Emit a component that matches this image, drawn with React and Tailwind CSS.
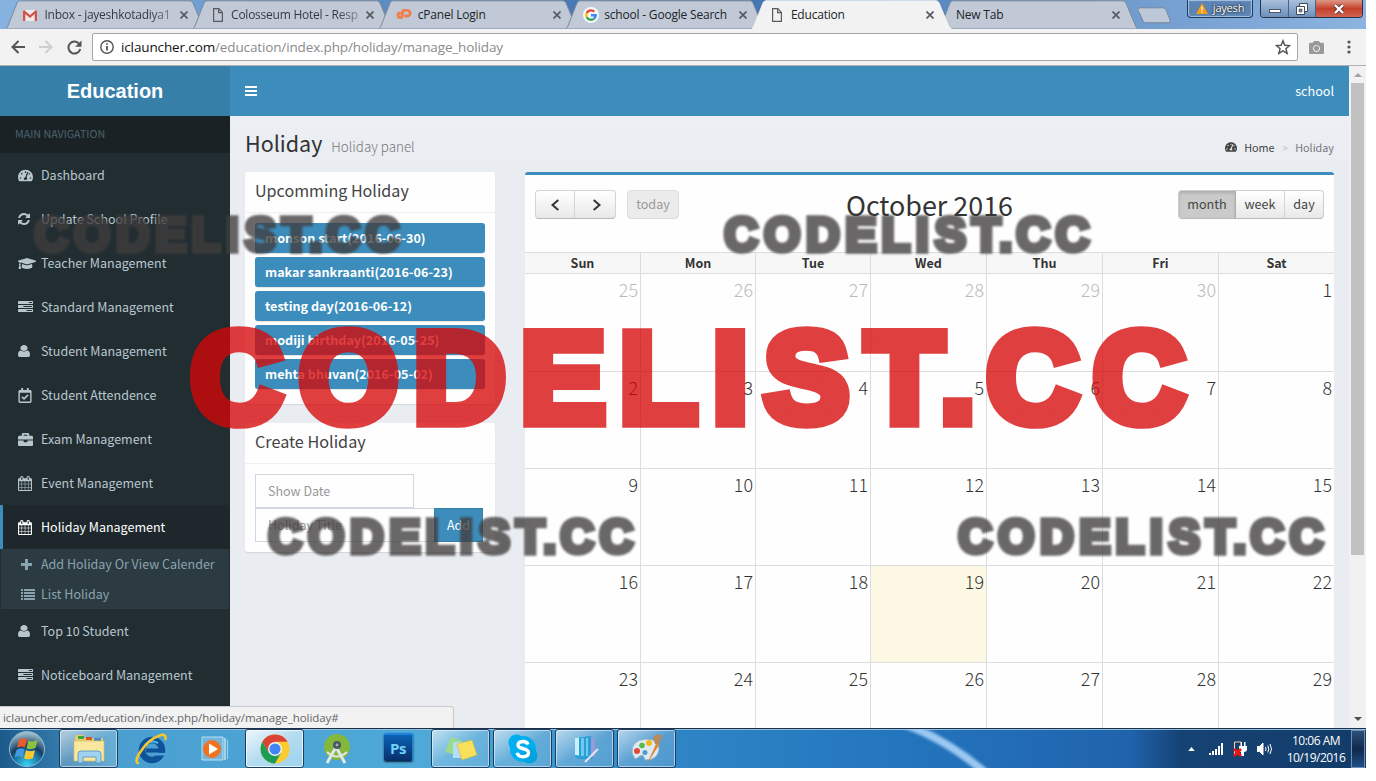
import React from "react";
import { FaTachometerAlt, FaGraduationCap, FaRegCalendarCheck, FaBriefcase, FaCamera } from "react-icons/fa";

const CAL =
  "M192 1664h288v-288h-288v288zm352 0h320v-288h-320v288zm-352-352h288v-320h-288v320zm352 0h320v-320h-320v320zm-352-384h288v-288h-288v288zm736 736h320v-288h-320v288zm-384-736h320v-288h-320v288zm768 736h288v-288h-288v288zm-384-352h320v-320h-320v320zm-352-864v-288q0-13-9.5-22.5t-22.5-9.5h-64q-13 0-22.5 9.5t-9.5 22.5v288q0 13 9.5 22.5t22.5 9.5h64q13 0 22.5-9.5t9.5-22.5zm736 864h288v-320h-288v320zm-384-384h320v-288h-320v288zm384 0h288v-288h-288v288zm32-480v-288q0-13-9.5-22.5t-22.5-9.5h-64q-13 0-22.5 9.5t-9.5 22.5v288q0 13 9.5 22.5t22.5 9.5h64q13 0 22.5-9.5t9.5-22.5zm384-64v1280q0 52-38 90t-90 38h-1408q-52 0-90-38t-38-90v-1280q0-52 38-90t90-38h128v-96q0-66 47-113t113-47h64q66 0 113 47t47 113v96h384v-96q0-66 47-113t113-47h64q66 0 113 47t47 113v96h128q52 0 90 38t38 90z";
const TASKS =
  "M1024 1408h640v-128h-640v128zm-384-512h1024v-128h-1024v128zm640-512h384v-128h-384v128zm512 832v256q0 26-19 45t-45 19h-1664q-26 0-45-19t-19-45v-256q0-26 19-45t45-19h1664q26 0 45 19t19 45zm0-512v256q0 26-19 45t-45 19h-1664q-26 0-45-19t-19-45v-256q0-26 19-45t45-19h1664q26 0 45 19t19 45zm0-512v256q0 26-19 45t-45 19h-1664q-26 0-45-19t-19-45v-256q0-26 19-45t45-19h1664q26 0 45 19t19 45z";
const USER =
  "M1536 1399q0 109-62.5 187t-150.5 78h-854q-88 0-150.5-78t-62.5-187q0-85 8.5-160.5t31.5-152 58.5-131 94-89 134.5-34.5q131 128 313 128t313-128q76 0 134.5 34.5t94 89 58.5 131 31.5 152 8.5 160.5zm-256-887q0 159-112.5 271.5t-271.5 112.5-271.5-112.5-112.5-271.5 112.5-271.5 271.5-112.5 271.5 112.5 112.5 271.5z";
const REFRESH =
  "M1639 1056q0 5-1 7-64 268-268 434.5t-478 166.5q-146 0-282.5-55t-243.5-157l-129 129q-19 19-45 19t-45-19-19-45v-448q0-26 19-45t45-19h448q26 0 45 19t19 45-19 45l-137 137q71 66 161 102t187 36q134 0 250-65t186-179q11-17 53-117 8-23 30-23h192q13 0 22.5 9.5t9.5 22.5zm25-800v448q0 26-19 45t-45 19h-448q-26 0-45-19t-19-45 19-45l138-138q-148-137-349-137-134 0-250 65t-186 179q-11 17-53 117-8 23-30 23h-199q-13 0-22.5-9.5t-9.5-22.5v-7q65-268 270-434.5t480-166.5q146 0 284 55.5t245 156.5l130-129q19-19 45-19t45 19 19 45z";

const Calendar = () => <svg viewBox="64 0 1664 1792" className="h-[15px] w-[14px]" fill="currentColor"><path d={CAL} /></svg>;
const Tasks = () => <svg viewBox="0 128 1792 1536" className="h-[12px] w-[15px]" preserveAspectRatio="none" fill="currentColor"><path d={TASKS} /></svg>;
const User = () => <svg viewBox="256 128 1280 1536" className="h-[12px] w-[12px]" preserveAspectRatio="none" fill="currentColor"><path d={USER} /></svg>;
const Refresh = () => <svg viewBox="128 128 1536 1536" className="h-[12px] w-[12px]" fill="currentColor"><path d={REFRESH} /></svg>;

function Cross() {
  return (
    <svg viewBox="0 0 8 8" className="h-2 w-2 shrink-0" stroke="#555b63" strokeWidth="1.7">
      <path d="M.5.5l7 7M7.5.5l-7 7" />
    </svg>
  );
}

function PageIcon() {
  return (
    <svg viewBox="0 0 10 14" className="ml-[3px] h-[14px] w-[10px]" fill="none" stroke="#5a5a5f" strokeWidth="1.2">
      <path d="M.6.6h5.2l3.6 3.8v9H.6z M5.6.6v4h3.8" />
    </svg>
  );
}

const Gmail = () => (
  <svg viewBox="0 0 14 11" className="h-[11px] w-[14px]">
    <path d="M0 0h14v11H0z" fill="#ececec" />
    <path d="M0 11V1l1-1 6 5 6-5 1 1v10h-2.3V4L7 8 2.3 4v7z" fill="#d3524a" />
  </svg>
);

const CPanel = () => (
  <svg viewBox="0 0 16 12" className="h-3 w-4" fill="none" stroke="#f17f4c" strokeWidth="2.8" strokeLinecap="round">
    <path d="M6.4 3.8H4.4a2.3 2.3 0 0 0 0 4.8h1.1L7.3 1.4h4a2.8 2.8 0 0 1 0 5.6H9.2" />
  </svg>
);

const Google = () => (
  <svg viewBox="0 0 16 16" className="h-4 w-4" fill="none" strokeWidth="2.4">
    <circle cx="8" cy="8" r="8" fill="#f5f7fa" />
    <path d="M11.3 4.7A4.7 4.7 0 0 0 3.8 6" stroke="#ea4335" />
    <path d="M3.8 6a4.7 4.7 0 0 0 0 4.2" stroke="#fbbc05" />
    <path d="M3.8 10.2a4.7 4.7 0 0 0 7.3 1.4" stroke="#34a853" />
    <path d="M11.1 11.6a4.6 4.6 0 0 0 1.6-3.3H8" stroke="#4285f4" />
  </svg>
);

const tabs = [
  { icon: <Gmail />, title: "Inbox - jayeshkotadiya1", fade: true },
  { icon: <PageIcon />, title: "Colosseum Hotel - Resp", fade: true },
  { icon: <CPanel />, title: "cPanel Login" },
  { icon: <Google />, title: "school - Google Search" },
  { icon: <PageIcon />, title: "Education", active: true },
  { title: "New Tab" },
];

function Tab({ icon, title, active, fade }) {
  return (
    <div className={active ? "relative z-10 h-[29px] w-[186.6px] shrink-0" : "relative h-[29px] w-[186.6px] shrink-0"}>
      <svg viewBox="0 0 200 29" className="absolute top-0 -left-[1px] h-[29px] w-[200px]">
        <path d="M0 28.5L1.500 27L11 3Q12 .8 14 .8H184Q186 .8 187 3L197 27L199 28.5V29H0z"
          fill={active ? "#f2f2f2" : "#c0c9d5"} stroke={active ? "#f2f2f2" : "#7b8a9d"} />
      </svg>
      <div className="relative flex h-[29px] items-center pt-px pl-[16px]">
        {icon && <span className="flex w-[21.500px] items-center">{icon}</span>}
        <span className={fade
          ? "w-[132px] overflow-hidden whitespace-nowrap bg-linear-to-r from-[#303740] from-80% to-[#303740]/30 bg-clip-text text-[12px] tracking-[-0.25px] text-transparent"
          : "w-[132px] grow-0 overflow-hidden whitespace-nowrap text-[12px] tracking-[-0.2px] text-[#20242a]"}>{title}</span>
        {!icon && <span className="w-[21.500px]" />}
        <span className="ml-[3px] flex"><Cross /></span>
      </div>
    </div>
  );
}

function BrowserTop() {
  return (
    <div className="flex h-[66px] flex-col font-['Open_Sans',sans-serif]">
      <div className="relative flex h-[29px] items-start bg-linear-to-r from-[#86b3e0] via-[#3d6fae] via-50% to-[#8db4e0] pl-[7px]">
        {tabs.map((t) => <Tab key={t.title} {...t} />)}
        <svg viewBox="0 0 34 17" className="mt-[7px] ml-[10px] h-[17px] w-[34px] shrink-0">
          <path d="M3 .8h23q2 0 3 2l4 10q1 3-1 3H9q-2 0-3-2L1 3Q0 .8 3 .8z" fill="#bcc8d8" stroke="#76879d" />
        </svg>
        <div className="absolute top-0 left-[1187px] flex h-[18px] w-[66px] items-center justify-center gap-[5px] rounded-b border border-t-0 border-[#1e3a5c] bg-[#5b83b3] text-[11px] text-white shadow-[inset_0_0_1px_1px_#a9c4e2]">
          <svg viewBox="0 0 12 11" className="h-[11px] w-3"><path d="M6 0l6 11H0z" fill="#f59b16" /><path d="M6 3.5v4M6 8.5v1.3" stroke="#fff" strokeWidth="1.2" /></svg>
          <span className="tracking-[-0.2px] [text-shadow:0_0_2px_#222,0_0_2px_#222]">jayesh</span>
        </div>
        <div className="absolute top-0 left-[1260px] flex h-[18px] w-[103px] overflow-hidden rounded-b border border-t-0 border-[#24344c] shadow-[inset_0_0_1px_1px_#d0def0]">
          <div className="flex w-[28px] items-center justify-center border-r border-[#4a6386] bg-linear-to-b from-[#a9c0dc] to-[#6d8fba]">
            <span className="mt-1 h-1 w-[12px] border border-[#4b5768] bg-white" />
          </div>
          <div className="flex w-[27px] items-center justify-center border-r border-[#4a6386] bg-linear-to-b from-[#a9c0dc] to-[#6d8fba]">
            <svg viewBox="0 0 12 12" className="h-3 w-3" fill="#fff" stroke="#3f4a5a"><path d="M3.5.5h8v8h-8z" /><path d="M.5 3.5h8v8h-8z" /><path d="M3.2 6.2h2.6v2.6H3.2z" fill="#8aa5c8" /></svg>
          </div>
          <div className="flex grow items-center justify-center bg-linear-to-b from-[#dd9686] via-[#c5402b] to-[#d06450]">
            <svg viewBox="0 0 12 10" className="h-[10px] w-3"><path d="M2 1l8 8M10 1L2 9" stroke="#6b3430" strokeWidth="4" /><path d="M2 1l8 8M10 1L2 9" stroke="#fff" strokeWidth="2.4" /></svg>
          </div>
        </div>
      </div>
      <div className="flex h-[37px] items-center border-b border-[#b0b0b0] bg-[#f2f2f2] pl-[11px]">
        <svg viewBox="0 0 14 14" className="h-[14px] w-[14px]" fill="none" stroke="#555" strokeWidth="2"><path d="M14 7H1.5M7.5 1L1.5 7l6 6" /></svg>
        <svg viewBox="0 0 14 14" className="ml-[14px] h-[14px] w-[14px]" fill="none" stroke="#cfcfcf" strokeWidth="2"><path d="M0 7h12.5M6.500 1l6 6-6 6" /></svg>
        <svg viewBox="0 0 15 15" className="ml-[14px] h-[15px] w-[15px]" fill="none" stroke="#555" strokeWidth="2"><path d="M12.500 4.200A6 6 0 1 0 13.300 9" /><path d="M14.500.5v6.300H8.200z" fill="#555" stroke="none" /></svg>
        <div className="ml-[10px] flex h-[28px] w-[1206px] items-center rounded-[2px] border border-[#a6a6a6] bg-white pl-[7px]">
          <svg viewBox="0 0 14 14" className="h-[14px] w-[14px]" fill="none" stroke="#555" strokeWidth="1.400"><circle cx="7" cy="7" r="6.200" /><path d="M7 6v4.500M7 3.300v1.500" strokeWidth="1.800" /></svg>
          <span className="ml-[7px] text-[13.500px] tracking-[-0.130px] text-[#8a8a8a]"><span className="text-[#111]">iclauncher.com</span>/education/index.php/holiday/manage_holiday</span>
          <svg viewBox="0 0 24 24" className="mr-[6px] ml-auto h-[16px] w-[16px]" fill="none" stroke="#555" strokeWidth="2.200"><path d="M12 2.500l2.700 6.800 7.300.5-5.600 4.700 1.800 7.100L12 17.700l-6.200 3.900 1.800-7.100L2 9.800l7.300-.5z" /></svg>
        </div>
        <FaCamera className="ml-[11px] h-[15px] w-[15px] text-[#999]" />
        <svg viewBox="0 0 4 14" className="ml-[23px] h-[14px] w-1" fill="#555"><circle cx="2" cy="2" r="1.600" /><circle cx="2" cy="7" r="1.600" /><circle cx="2" cy="12" r="1.600" /></svg>
      </div>
    </div>
  );
}

const nav = [
  { icon: <FaTachometerAlt className="h-[15px] w-[15px]" />, label: "Dashboard" },
  { icon: <Refresh />, label: "Update School Profile" },
  { icon: <FaGraduationCap className="h-[15px] w-[18px]" />, label: "Teacher Management" },
  { icon: <Tasks />, label: "Standard Management" },
  { icon: <User />, label: "Student Management" },
  { icon: <FaRegCalendarCheck className="h-[15px] w-[14px]" />, label: "Student Attendence" },
  { icon: <FaBriefcase className="h-[15px] w-[15px]" />, label: "Exam Management" },
  { icon: <Calendar />, label: "Event Management" },
];

function NavItem({ icon, label, active }) {
  return (
    <div className={active
      ? "flex h-[44px] items-center border-l-[3px] border-[#3c8dbc] bg-[#1e282c] pl-[15px] text-white"
      : "flex h-[44px] items-center border-l-[3px] border-transparent pl-[15px] text-[#b8c7ce]"}>
      <span className="flex w-[23px] shrink-0 items-center">{icon}</span>
      <span className="whitespace-nowrap">{label}</span>
    </div>
  );
}

function Sidebar() {
  return (
    <aside className="flex w-[230px] shrink-0 flex-col bg-[#222d32] text-[12.5px]">
      <div className="flex h-[50px] shrink-0 items-center justify-center bg-[#367fa9] font-['Liberation_Sans',sans-serif] text-[20px] font-bold text-white">Education</div>
      <div className="flex h-[37px] shrink-0 items-center bg-[#1a2226] pl-[15px] text-[10.7px] text-[#4b646f]">MAIN NAVIGATION</div>
      {nav.map((n) => <NavItem key={n.label} {...n} />)}
      <NavItem icon={<Calendar />} label="Holiday Management" active />
      <div className="mx-px flex h-[60px] shrink-0 flex-col bg-[#2c3b41] text-[#8aa4af]">
        <div className="flex h-[30px] items-center pl-[20px]">
          <span className="w-[20px]"><svg viewBox="0 0 11 11" className="h-[11px] w-[11px]" fill="currentColor"><path d="M4 0h3v4h4v3H7v4H4V7H0V4h4z" /></svg></span>
          Add Holiday Or View Calender
        </div>
        <div className="flex h-[30px] items-center pl-[20px]">
          <span className="w-[20px]"><svg viewBox="0 0 14 11" className="h-[11px] w-[14px]" fill="currentColor"><path d="M0 0h2v2H0zM3 0h11v2H3zM0 3h2v2H0zM3 3h11v2H3zM0 6h2v2H0zM3 6h11v2H3zM0 9h2v2H0zM3 9h11v2H3z" /></svg></span>
          List Holiday
        </div>
      </div>
      <NavItem icon={<User />} label="Top 10 Student" />
      <NavItem icon={<Tasks />} label="Noticeboard Management" />
    </aside>
  );
}

const holidays = [
  "monson start(2016-06-30)",
  "makar sankraanti(2016-06-23)",
  "testing day(2016-06-12)",
  "modiji birthday(2016-05-25)",
  "mehta bhuvan(2016-05-02)",
];

const weeks = [
  [25, 26, 27, 28, 29, 30, 1],
  [2, 3, 4, 5, 6, 7, 8],
  [9, 10, 11, 12, 13, 14, 15],
  [16, 17, 18, 19, 20, 21, 22],
  [23, 24, 25, 26, 27, 28, 29],
];

function LeftColumn() {
  return (
    <div className="flex w-[250px] shrink-0 flex-col">
      <section className="h-[232px] rounded-[3px] bg-[#fefefe] shadow-[0_1px_1px_rgba(0,0,0,0.1)]">
        <h3 className="flex h-[41px] items-center border-b border-[#f0f0f0] pb-[3px] pl-[10px] text-[16.1px] text-[#444]">Upcomming Holiday</h3>
        <div className="flex flex-col gap-1 p-[10px]">
          {holidays.map((h) => (
            <div key={h} className="flex h-[30px] items-center rounded-[3px] bg-[#3c8dbc] pl-[10px] text-[12.6px] font-bold text-white shadow-[0_1px_1px_rgba(0,0,0,0.1)]">{h}</div>
          ))}
        </div>
      </section>
      <section className="mt-[19px] h-[129px] rounded-[3px] bg-[#fefefe] shadow-[0_1px_1px_rgba(0,0,0,0.1)]">
        <h3 className="flex h-[41px] items-center border-b border-[#f0f0f0] pb-[3px] pl-[10px] text-[16.2px] text-[#444]">Create Holiday</h3>
        <div className="flex flex-col p-[10px] text-[12.5px] text-[#999]">
          <div className="flex h-[34px] w-[159px] items-center border border-[#d2d6de] pl-[12px]">Show Date</div>
          <div className="flex h-[34px] w-[228px]">
            <div className="flex w-[179px] items-center border border-r-0 border-[#d2d6de] pl-[12px]">Holiday Title</div>
            <div className="flex w-[49px] items-center justify-center border border-[#367fa9] bg-[#3c8dbc] text-white">Add</div>
          </div>
        </div>
      </section>
    </div>
  );
}

function CalendarPanel() {
  return (
    <section className="flex w-[809px] shrink-0 flex-col rounded-t-[3px] border-t-[3px] border-[#3c8dbc] bg-[#fefefe]">
      <div className="grid h-[77px] grid-cols-[1fr_auto_1fr] items-start px-[10px] pt-[15px] text-[12.6px] text-[#444]">
        <div className="flex">
          <div className="flex h-[29px] w-[81px] rounded border border-[#d4d4d4] border-b-[#b8b8b8] bg-linear-to-b from-white to-[#e8e8e8]">
            <span className="flex w-[40px] items-center justify-center border-r border-[#d4d4d4]"><svg viewBox="0 0 8 12" className="h-3 w-2" fill="none" stroke="#333" strokeWidth="2"><path d="M7.300 1L1.500 6l5.800 5" /></svg></span>
            <span className="flex w-[40px] items-center justify-center pl-[3px]"><svg viewBox="0 0 8 12" className="h-3 w-2" fill="none" stroke="#333" strokeWidth="2"><path d="M.7 1l5.800 5L.7 11" /></svg></span>
          </div>
          <span className="ml-[11px] flex h-[29px] w-[52px] items-center justify-center rounded border border-[#dcdcdc] bg-[#ebebeb] text-[#999]">today</span>
        </div>
        <h2 className="text-[26.9px] leading-[30px] whitespace-nowrap text-[#333]">October 2016</h2>
        <div className="flex h-[29px] justify-self-end rounded border border-[#cfcfcf] border-b-[#b8b8b8] bg-linear-to-b from-white to-[#e8e8e8]">
          <span className="flex w-[57px] items-center justify-center rounded-l-[3px] border-r border-[#aaa] bg-[#cacaca] shadow-[inset_0_2px_3px_rgba(0,0,0,0.15)]">month</span>
          <span className="flex w-[49px] items-center justify-center border-r border-[#d4d4d4]">week</span>
          <span className="flex w-[38px] items-center justify-center">day</span>
        </div>
      </div>
      <div className="grid h-[21px] grid-cols-[116px_115px_115px_116px_116px_116px_115px] border-t border-[#ddd] bg-[#f7f7f7] text-[12.5px] font-bold text-[#333]">
        {["Sun", "Mon", "Tue", "Wed", "Thu", "Fri", "Sat"].map((d) => (
          <div key={d} className="flex items-center justify-center border-r border-[#ddd] last:border-r-0">{d}</div>
        ))}
      </div>
      {weeks.map((w, i) => (
        <div key={i} className="grid h-[97px] shrink-0 grid-cols-[116px_115px_115px_116px_116px_116px_115px] border-t border-[#ddd] nth-[3]:h-[98px]">
          {w.map((d, j) => (
            <div key={j} className={
              i === 3 && j === 3
                ? "border-r border-[#ddd] bg-[#fcf8e3] pt-[2px] pr-[2px] text-right text-[17.900px] leading-[26px] font-light text-[#333]"
                : i === 0 && j < 6
                  ? "border-r border-[#ddd] pt-[2px] pr-[2px] text-right text-[17.900px] leading-[26px] font-light text-[#bbb]"
                  : "border-r border-[#ddd] pt-[2px] pr-[2px] text-right text-[17.900px] leading-[26px] font-light text-[#333] last:border-r-0"}>{d}</div>
          ))}
        </div>
      ))}
    </section>
  );
}

function Slot({ open, bright, children }) {
  return (
    <div className={bright
      ? "flex h-[39px] w-[59px] items-center justify-center rounded-[3px] border border-[#1a3f63] bg-linear-to-br from-white/90 via-[#b4dcf0] to-[#9bd2ee] shadow-[inset_0_0_0_1px_rgba(255,255,255,0.7)]"
      : open
        ? "flex h-[39px] w-[59px] items-center justify-center rounded-[3px] border border-[#1a3f63] bg-linear-to-br from-white/65 via-white/20 to-white/15 shadow-[inset_0_0_0_1px_rgba(255,255,255,0.5)]"
        : "flex h-[39px] w-[59px] items-center justify-center"}>{children}</div>
  );
}

function Taskbar() {
  return (
    <footer className="relative flex h-[40px] w-[1366px] shrink-0 overflow-hidden border-t border-[#1d3048] bg-[linear-gradient(90deg,#1d5a8c_0px,#2f74a5_50px,#4a9fd0_120px,#4ea9d8_420px,#2f86c6_660px,#2375bd_900px,#2063ad_1130px,#164375_1180px,#123b68_1366px)] shadow-[inset_0_1px_0_#8fc0e0]">
      <svg viewBox="0 0 140 39" className="absolute top-0 left-[880px] h-[39px] w-[140px]"><path d="M15 -8Q65 8 108 46" stroke="#9cc9f2" strokeWidth="8" fill="none" className="blur-[1.5px]" /></svg>
      <div className="relative flex w-[59px] shrink-0 items-center pl-[8px]">
        <svg viewBox="0 0 38 38" className="h-[38px] w-[38px]">
          <defs><radialGradient id="orb" cx=".5" cy=".95" r=".9"><stop offset="0" stopColor="#35d3f4" /><stop offset=".45" stopColor="#1a6c9c" /><stop offset=".6" stopColor="#153e60" /><stop offset="1" stopColor="#9cbccd" /></radialGradient></defs>
          <circle cx="19" cy="19" r="17.500" fill="url(#orb)" stroke="#8dbdd6" />
          <path d="M11 10q4-3 8-.5l-2 8q-4-2-8 .5z" fill="#ee5b2b" />
          <path d="M20.500 10.500q4 2 9-.5l-2 8q-5 2-9 .2z" fill="#8ac440" />
          <path d="M8.500 20q4-3 8-.5l-2 8q-4-2.500-8 0z" fill="#3f9ae0" />
          <path d="M18 20.300q4 2 9 0l-2 8q-5 2-9 0z" fill="#fbc82d" />
        </svg>
      </div>
      <div className="relative flex gap-[3px]">
        <Slot open>
          <svg viewBox="0 0 34 30" className="h-[30px] w-[34px]"><path d="M3 3q0-2 2-2h6l2 3h18v23H3z" fill="#e9cc6c" /><path d="M6 2h6v3H6z" fill="#3da63a" /><path d="M14 3h6v3h-6z" fill="#d9532a" /><path d="M22 4h7v3h-7z" fill="#4a8dd0" /><path d="M2 7h30v20H2z" fill="#f9e7a0" stroke="#d9bd62" strokeWidth=".7" /><path d="M6 29V20q0-3 3-3h17q3 0 3 3v9h-5v-6H11v6z" fill="#9fd2ee" stroke="#4d94bf" strokeWidth=".8" /></svg>
        </Slot>
        <Slot>
          <svg viewBox="0 0 34 32" className="h-[32px] w-[34px]" fill="none"><circle cx="18" cy="17" r="10" stroke="#0e5299" strokeWidth="6.500" /><path d="M12 17.500h18" stroke="#0e5299" strokeWidth="4" /><path d="M22 21.200h10" stroke="#4ba5d6" strokeWidth="2.600" /><path d="M11 12q5-6 13-2" stroke="#55b9ee" strokeWidth="2" /><path d="M5 30Q0 30 5 21Q14 6 27 2Q33 1 31 7" stroke="#f4c531" strokeWidth="2.600" /></svg>
        </Slot>
        <Slot>
          <svg viewBox="0 0 28 26" className="ml-1 h-[26px] w-[28px]"><path d="M1 1h21v23H1z" fill="#74b5dc" stroke="#b9dff2" /><path d="M23 2h2v22h-2zM26 4h1v19h-1z" fill="#a4d2ec" /><circle cx="11" cy="13" r="9" fill="#f0741f" /><path d="M8 7.500v11l9-5.500z" fill="#fff" /></svg>
        </Slot>
        <Slot bright>
          <svg viewBox="0 0 30 30" className="h-[30px] w-[30px]"><circle cx="15" cy="15" r="14.500" fill="#fccb30" /><path d="M2.400 7.800A14.500 14.500 0 0 1 27.600 7.800H15L8.700 18.600z" fill="#dc4437" /><path d="M2.400 7.800A14.500 14.500 0 0 0 15 29.500L21.200 18.600H8.700z" fill="#1b9d58" /><circle cx="15" cy="15" r="7" fill="#f3f3f3" /><circle cx="15" cy="15" r="5.600" fill="#4285f4" /></svg>
        </Slot>
        <Slot>
          <svg viewBox="0 0 28 30" className="h-[30px] w-[28px]" fill="none"><circle cx="14" cy="13" r="13" fill="#84b83d" /><path d="M4 29L13 13l9 16" stroke="#e3e6e9" strokeWidth="3" /><path d="M4 18q10 9 20 0" stroke="#e3e6e9" strokeWidth="2" /><circle cx="14" cy="11" r="4" fill="#455a64" /><circle cx="14" cy="11" r="1.400" fill="#aaa" /></svg>
        </Slot>
        <Slot>
          <div className="mb-[3px] flex h-[28px] w-[29px] items-center justify-center rounded-[2px] border-t-2 border-r border-[#1d83da] bg-linear-to-b from-[#0b63b8] to-[#082f69] font-['Open_Sans',sans-serif] text-[15px] leading-none font-bold tracking-[-0.5px] text-[#6ed3fa] shadow-[0_1px_2px_#123]">Ps</div>
        </Slot>
        <Slot open>
          <svg viewBox="0 0 32 26" className="h-[26px] w-[32px]"><path d="M6 1l11 4-6 14-11-3z" fill="#9bdc88" /><path d="M8 6h14v16H8z" fill="#b5dcfa" /><path d="M12 8l15-4 5 15-15 5z" fill="#f8e05a" stroke="#d4b736" strokeWidth=".6" /></svg>
        </Slot>
        <Slot open>
          <svg viewBox="0 0 30 30" className="h-[30px] w-[30px]"><circle cx="15" cy="15" r="13" fill="#00aff0" /><circle cx="8.500" cy="8.500" r="8" fill="#00aff0" /><circle cx="21.500" cy="21.500" r="8" fill="#00a3e0" /><path d="M20 10.500Q19 7.500 15 7.500q-5 0-5 3.500c0 5 10.500 2.500 10.500 7.500 0 3-2.500 4.200-5.500 4.200-4 0-5.500-2-5.800-4" fill="none" stroke="#fff" strokeWidth="3.400" /></svg>
        </Slot>
        <Slot open>
          <svg viewBox="0 0 28 28" className="h-[28px] w-[28px]"><path d="M4 3l16-2 4 3v19l-4 1H7l-3-3z" fill="#2c9ed8" /><path d="M4 3l4-.5v18L4 20z" fill="#c9effb" /><path d="M10 3h3v18h-3zM15 3h2v18h-2z" fill="#6fc9ef" /><path d="M20 1l4 3v19l-4-2z" fill="#9a9bdc" /><path d="M14 27L27 14" stroke="#e5e5ea" strokeWidth="2" /></svg>
        </Slot>
        <Slot open>
          <svg viewBox="0 0 34 32" className="h-[32px] w-[34px]"><path d="M2 20Q1 7 16 6q14 0 13 11-2 10-13 10-2 0-2-3-1-3-4-1-4 3-5 3z" fill="#dceaf3" stroke="#8fb2c9" /><circle cx="7" cy="18" r="3" fill="#e04a3a" /><circle cx="12" cy="12.500" r="2.800" fill="#57b947" /><circle cx="19" cy="10" r="3" fill="#f5b51e" /><circle cx="15" cy="19.500" r="2.500" fill="#4f9cc8" /><path d="M17 31l9-20 3 1z" fill="#e4832c" /><path d="M25 11l-2-7q5-5 9-1l-3 9z" fill="#b98a5c" /></svg>
        </Slot>
      </div>
      <div className="relative ml-auto flex items-center font-['Open_Sans',sans-serif] text-white">
        <svg viewBox="0 0 8 5" className="mt-[1px] h-[4px] w-[7px]" fill="#fff"><path d="M4 0l4 5H0z" /></svg>
        <svg viewBox="0 0 15 12" className="ml-[14px] h-3 w-[15px]" fill="#fff"><path d="M0 10h2v2H0zM3 8h2v4H3zM6 6h2v6H6zM9 3h2v9H9zM12 0h2v12h-2z" /></svg>
        <svg viewBox="0 0 14 16" className="ml-[9px] h-4 w-[14px]"><path d="M1.500 1v12M1.500 1H8" stroke="#1a2a3c" strokeWidth="3" fill="none" /><path d="M1.500 1v12M1.500 1H8" stroke="#ddd" strokeWidth="1.200" fill="none" /><path d="M6 5h8v3q0 3-3 3v4H8v-4q-2 0-2-3zM7.500 1H9v4H7.500zM11 1h1.500v4H11z" fill="#fff" /><path d="M1 8l7 7M8 8l-7 7" stroke="#f01414" strokeWidth="2.600" /></svg>
        <svg viewBox="0 0 16 14" className="ml-[10px] h-[14px] w-4" fill="none" stroke="#fff"><path d="M0 4.500h2.500L6 1v12L2.500 9.500H0z" fill="#fff" /><path d="M8.500 5q1 2 0 4M10.800 3.500q2 3.500 0 7M13 2q3 5 0 10" /></svg>
        <div className="ml-[13px] flex w-[60px] flex-col text-center text-[12px] leading-[17px] tracking-[-0.500px] whitespace-nowrap">
          <span>10:06 AM</span>
          <span>10/19/2016</span>
        </div>
        <div className="mr-px ml-[5px] h-[38px] w-[14px] border border-[#6d8fb5] bg-linear-to-b from-[#2f4f78] via-[#10294c] to-[#1f4f86]" />
      </div>
    </footer>
  );
}

const GLYPH_X = "190.500 299 413.500 520.500 619.500 712.500 764 865.500 940 986.500 1093";

function Mark({ weight }) {
  return (
    <text x={GLYPH_X} y="421.500" fontFamily="Liberation Sans, sans-serif" fontWeight="bold" fontSize="127.500" strokeWidth={weight} strokeLinejoin="miter">CODELIST.CC</text>
  );
}

function Watermarks() {
  const spots = [
    [34, 216],
    [724, 216],
    [268, 518],
    [958, 518],
  ];
  return (
    <svg viewBox="0 0 1376 781" className="pointer-events-none absolute inset-0 z-50 h-[781px] w-[1376px]">
      <g opacity=".767" fill="#d70606" stroke="#d70606" className="blur-[0.700px]"><Mark weight="11.500" /></g>
      {spots.map(([x, y]) => (
        <g key={`${x}-${y}`} opacity=".78" fill="#403d3d" stroke="#403d3d" className="blur-[1px]">
          <g transform={`translate(${x} ${y}) scale(.367 .374) translate(-190 -328)`}><Mark weight="15" /></g>
        </g>
      ))}
    </svg>
  );
}

export default function App() {
  return (
    <div className="relative h-[781px] w-[1376px] overflow-hidden bg-white font-['Noto_Sans_CJK_SC',sans-serif]">
      <div className="flex h-[768px] w-[1366px] flex-col">
        <BrowserTop />
        <div className="relative flex h-[662px] shrink-0 overflow-hidden">
          <Sidebar />
          <div className="flex w-[1119px] shrink-0 flex-col bg-[#e9edf2]">
            <header className="flex h-[50px] shrink-0 items-center justify-between bg-[#3c8dbc] px-[15px] text-[12.6px] text-white">
              <svg viewBox="0 0 12 10" className="h-[10px] w-3" fill="#fff"><path d="M0 0h12v2H0zM0 4h12v2H0zM0 8h12v2H0z" /></svg>
              <span>school</span>
            </header>
            <div className="flex h-[56px] shrink-0 items-center justify-between bg-linear-to-b from-[#ecf0f5] to-[#e9edf2] px-[15px]">
              <h1 className="text-[21.500px] leading-[30px] text-[#333]">Holiday<small className="ml-[9px] text-[13.400px] font-light text-[#777]">Holiday panel</small></h1>
              <div className="mt-[6px] flex items-center text-[10.800px] text-[#444]">
                <FaTachometerAlt className="mr-[7px] h-[12px] w-[12px]" />Home
                <span className="pr-[7px] pl-[8px] text-[10px] text-[#bbb]">&gt;</span>
                <span className="text-[#777]">Holiday</span>
              </div>
            </div>
            <div className="flex gap-[30px] pl-[15px]">
              <LeftColumn />
              <CalendarPanel />
            </div>
          </div>
          <div className="flex w-[17px] shrink-0 flex-col items-center justify-between bg-[#f1f1f1] px-[2px]">
            <svg viewBox="0 0 8 4" className="mt-[7px] h-1 w-2" fill="#a3a3a3"><path d="M4 0l4 4H0z" /></svg>
            <div className="mt-[6px] h-[472px] w-[13px] bg-[#c1c1c1]" />
            <svg viewBox="0 0 8 4" className="mt-auto mb-[7px] h-1 w-2" fill="#505050"><path d="M4 4L0 0h8z" /></svg>
          </div>
          <div className="absolute bottom-0 left-0 flex h-[22px] w-[454px] items-center rounded-tr-[4px] border-t border-r border-[#c8c8c8] bg-[#f2f2f2] pl-[3px] font-['Open_Sans',sans-serif] text-[11.500px] tracking-[-0.060px] text-[#666]">iclauncher.com/education/index.php/holiday/manage_holiday#</div>
        </div>
        <Taskbar />
      </div>
      <Watermarks />
    </div>
  );
}
